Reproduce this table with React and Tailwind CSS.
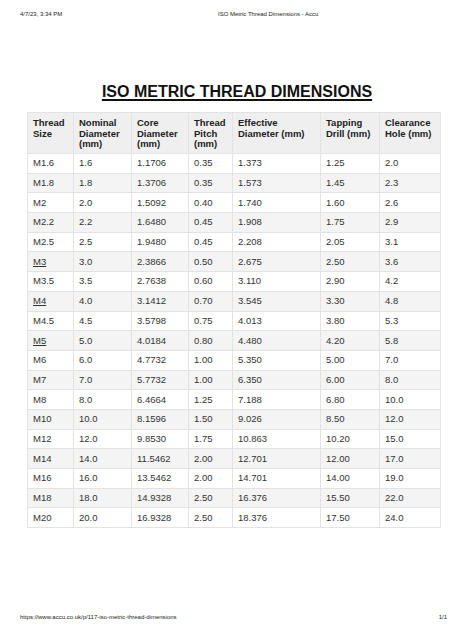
import React from 'react';

const rows = [
  ['M1.6', '1.6', '1.1706', '0.35', '1.373', '1.25', '2.0'],
  ['M1.8', '1.8', '1.3706', '0.35', '1.573', '1.45', '2.3'],
  ['M2', '2.0', '1.5092', '0.40', '1.740', '1.60', '2.6'],
  ['M2.2', '2.2', '1.6480', '0.45', '1.908', '1.75', '2.9'],
  ['M2.5', '2.5', '1.9480', '0.45', '2.208', '2.05', '3.1'],
  ['M3', '3.0', '2.3866', '0.50', '2.675', '2.50', '3.6', true],
  ['M3.5', '3.5', '2.7638', '0.60', '3.110', '2.90', '4.2'],
  ['M4', '4.0', '3.1412', '0.70', '3.545', '3.30', '4.8', true],
  ['M4.5', '4.5', '3.5798', '0.75', '4.013', '3.80', '5.3'],
  ['M5', '5.0', '4.0184', '0.80', '4.480', '4.20', '5.8', true],
  ['M6', '6.0', '4.7732', '1.00', '5.350', '5.00', '7.0'],
  ['M7', '7.0', '5.7732', '1.00', '6.350', '6.00', '8.0'],
  ['M8', '8.0', '6.4664', '1.25', '7.188', '6.80', '10.0'],
  ['M10', '10.0', '8.1596', '1.50', '9.026', '8.50', '12.0'],
  ['M12', '12.0', '9.8530', '1.75', '10.863', '10.20', '15.0'],
  ['M14', '14.0', '11.5462', '2.00', '12.701', '12.00', '17.0'],
  ['M16', '16.0', '13.5462', '2.00', '14.701', '14.00', '19.0'],
  ['M18', '18.0', '14.9328', '2.50', '16.376', '15.50', '22.0'],
  ['M20', '20.0', '16.9328', '2.50', '18.376', '17.50', '24.0'],
];

const headers = [
  ['Thread', 'Size'],
  ['Nominal', 'Diameter', '(mm)'],
  ['Core', 'Diameter', '(mm)'],
  ['Thread', 'Pitch', '(mm)'],
  ['Effective', 'Diameter (mm)'],
  ['Tapping', 'Drill (mm)'],
  ['Clearance', 'Hole (mm)'],
];

const widths = ['w-[46px]', 'w-[58px]', 'w-[57px]', 'w-[44px]', 'w-[88px]', 'w-[59px]', 'w-[61px]'];

export default function App() {
  return (
    <div className="flex flex-col h-[632px] w-[474px] bg-white text-black font-['Liberation_Sans',Arial,sans-serif]">
      {/* print header */}
      <div className="flex pt-[10px] pl-[20px] text-[6px] leading-[8px] text-[#222]">
        <span className="w-[198px]">4/7/23, 3:34 PM</span>
        <span>ISO Metric Thread Dimensions - Accu</span>
      </div>

      <h1 className="mt-[65px] text-center text-[16px] leading-[18px] font-bold underline underline-offset-2 decoration-[1.5px] text-[#111]">
        ISO METRIC THREAD DIMENSIONS
      </h1>

      <table className="mt-[11px] ml-[27px] w-[413px] table-fixed border-collapse border border-[#e3e3e3] text-[9.5px]">
        <colgroup>
          {widths.map((w, i) => (
            <col key={i} className={w} />
          ))}
        </colgroup>
        <thead>
          <tr className="h-[41px] bg-[#efefef]">
            {headers.map((h, i) => (
              <th key={i} className="border border-[#e3e3e3] pl-[5px] pr-[2px] pt-[5px] align-top text-left font-bold leading-[10.5px] text-[#222]">
                {h.map((line, j) => (
                  <div key={j} className="whitespace-nowrap">{line}</div>
                ))}
              </th>
            ))}
          </tr>
        </thead>
        <tbody>
          {rows.map((r, i) => (
            <tr key={i} className={`h-[19.7px] ${i % 2 === 1 ? 'bg-[#f4f4f4]' : 'bg-white'}`}>
              {r.slice(0, 7).map((c, j) => (
                <td key={j} className="border border-[#e3e3e3] px-[5px] py-0 align-middle leading-[12px] text-[#333]">
                  {j === 0 && r[7] ? <span className="underline underline-offset-1">{c}</span> : c}
                </td>
              ))}
            </tr>
          ))}
        </tbody>
      </table>

      <div className="mt-auto flex justify-between pl-[20px] pr-[27px] pb-[11px] text-[6px] leading-[8px] text-[#222]">
        <span>https://www.accu.co.uk/p/117-iso-metric-thread-dimensions</span>
        <span>1/1</span>
      </div>
    </div>
  );
}
